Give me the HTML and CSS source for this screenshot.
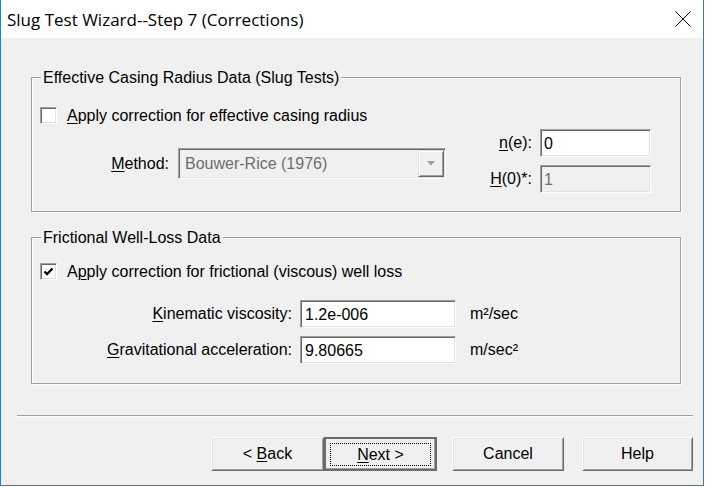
FILE: index.html
```html
<!DOCTYPE html>
<html>
<head>
<meta charset="utf-8">
<title>Slug Test Wizard--Step 7 (Corrections)</title>
<link rel="stylesheet" href="styles.css">
</head>
<body>
<div class="window">
  <div class="titlebar">
    <span class="title">Slug Test Wizard--Step 7 (Corrections)</span>
    <svg class="close" width="16" height="16" viewBox="0 0 16 16"><path d="M0.5 0.5 L15.5 15.5 M15.5 0.5 L0.5 15.5" stroke="#000" stroke-width="1" fill="none"/></svg>
  </div>
  <div class="client">
    <div class="group g1">
      <div class="group-title">Effective Casing Radius Data (Slug Tests)</div>
      <div class="check-row c1">
        <span class="checkbox"></span>
        <span><u>A</u>pply correction for effective casing radius</span>
      </div>
      <div class="method-row">
        <div class="method">
          <span class="method-lbl"><u>M</u>ethod:</span>
          <div class="combo">
            <span class="combo-text">Bouwer-Rice (1976)</span>
            <span class="combo-btn"><svg width="8" height="5" viewBox="0 0 8 5"><path d="M0 0 H8 L4 4.5 Z" fill="#a0a0a0"/></svg></span>
          </div>
        </div>
        <div class="params">
          <div class="param"><span class="param-lbl"><u>n</u>(e):</span><div class="edit small">0</div></div>
          <div class="param"><span class="param-lbl"><u>H</u>(0)*:</span><div class="edit small disabled">1</div></div>
        </div>
      </div>
    </div>

    <div class="group g2">
      <div class="group-title">Frictional Well-Loss Data</div>
      <div class="check-row c2">
        <span class="checkbox"><svg width="15" height="15" viewBox="0 0 15 15"><polyline points="3.5,7.5 6,10 11.5,4.5" fill="none" stroke="#000" stroke-width="2.3"/></svg></span>
        <span>A<u>p</u>ply correction for frictional (viscous) well loss</span>
      </div>
      <div class="field-row r1">
        <span class="field-lbl"><u>K</u>inematic viscosity:</span>
        <div class="edit wide">1.2e-006</div>
        <span class="unit">m²/sec</span>
      </div>
      <div class="field-row r2">
        <span class="field-lbl"><u>G</u>ravitational acceleration:</span>
        <div class="edit wide">9.80665</div>
        <span class="unit">m/sec²</span>
      </div>
    </div>

    <div class="sep"></div>

    <div class="buttons">
      <div class="btn back"><span>&lt; <u>B</u>ack</span></div>
      <div class="btn next"><span class="focus"><span><u>N</u>ext &gt;</span></span></div>
      <div class="btn cancel"><span>Cancel</span></div>
      <div class="btn help"><span>Help</span></div>
    </div>
  </div>
</div>
</body>
</html>
```

FILE: styles.css
```css
* { box-sizing: border-box; }
html, body { margin: 0; padding: 0; }
body {
  width: 708px;
  height: 487px;
  background: #fff;
  font-family: "Liberation Sans", Arial, sans-serif;
  font-size: 16px;
  line-height: 18px;
  color: #000;
  overflow: hidden;
}
u { text-decoration-thickness: 1px; text-underline-offset: 2px; }

.window {
  width: 704px;
  height: 486px;
  border: 1px solid #1883d7;
  border-top: none;
  display: flex;
  flex-direction: column;
}
.titlebar {
  height: 38px;
  flex: none;
  background: #fff;
  display: flex;
  align-items: center;
  padding-left: 6px;
  padding-right: 12px;
}
.title {
  font-family: "Open Sans", "Noto Sans", sans-serif;
  font-size: 17px;
  line-height: 23px;
}
.close { margin-left: auto; display: block; }

.client {
  flex: 1;
  background: #f0f0f0;
  padding-top: 39px;
}

.group {
  margin-left: 30px;
  width: 650px;
  border: 1px solid #a0a0a0;
  box-shadow: inset 1px 1px 0 #fff, 1px 1px 0 #fff;
}
.group-title {
  width: fit-content;
  margin: -9px 0 0 9px;
  padding: 0 2px;
  background: #f0f0f0;
  line-height: 18px;
}
.g2 { margin-top: 25px; padding-bottom: 19px; }

.check-row {
  display: flex;
  align-items: center;
  height: 17px;
  margin-left: 8px;
  gap: 10px;
}
.c1 { margin-top: 20px; }
.c2 { margin-top: 16px; }
.checkbox {
  width: 17px;
  height: 17px;
  flex: none;
  background: #fff;
  border: 1px solid;
  border-color: #a0a0a0 #fff #fff #a0a0a0;
  box-shadow: inset 1px 1px 0 #696969, inset -1px -1px 0 #e3e3e3;
}
.checkbox svg { display: block; }

.method-row {
  display: flex;
  align-items: flex-start;
  margin-top: 5px;
  padding-right: 29px;
  padding-bottom: 18px;
}
.method {
  display: flex;
  align-items: center;
  margin-top: 19px;
}
.method-lbl {
  width: 137px;
  text-align: right;
  margin-right: 9px;
}
.combo {
  width: 268px;
  height: 31px;
  display: flex;
  align-items: stretch;
  padding: 1px;
  background: #f0f0f0;
  border: 1px solid;
  border-color: #a0a0a0 #fff #fff #a0a0a0;
  box-shadow: inset 1px 1px 0 #696969, inset -1px -1px 0 #e3e3e3;
}
.combo-text {
  flex: 1;
  padding-left: 5px;
  line-height: 27px;
  color: #6d6d6d;
}
.combo-btn {
  width: 26px;
  flex: none;
  display: flex;
  align-items: center;
  justify-content: center;
  border: 1px solid;
  border-color: #e3e3e3 #696969 #696969 #e3e3e3;
  box-shadow: inset 1px 1px 0 #fff, inset -1px -1px 0 #a0a0a0;
  background: #f0f0f0;
}
.combo-btn svg { display: block; }

.params {
  margin-left: auto;
  display: flex;
  flex-direction: column;
  gap: 8px;
}
.param { display: flex; align-items: center; }
.param-lbl {
  width: 60px;
  text-align: right;
  margin-right: 8px;
}

.edit {
  height: 28px;
  border: 1px solid;
  border-color: #a0a0a0 #fff #fff #a0a0a0;
  box-shadow: inset 1px 1px 0 #696969, inset -1px -1px 0 #e3e3e3;
  background: #fff;
  padding: 2px 0 0 4px;
  line-height: 24px;
}
.edit.small { width: 111px; padding-left: 3px; }
.edit.wide { width: 156px; }
.edit.disabled { background: #f0f0f0; color: #6d6d6d; }

.field-row { display: flex; align-items: center; }
.r1 { margin-top: 20px; }
.r2 { margin-top: 8px; }
.field-lbl {
  width: 260px;
  text-align: right;
  margin-right: 8px;
}
.unit { margin-left: 14px; }

.sep {
  margin: 31px 0 0 16px;
  width: 676px;
  height: 2px;
  border-top: 1px solid #a0a0a0;
  border-bottom: 1px solid #fff;
}

.buttons {
  display: flex;
  justify-content: flex-end;
  margin-top: 20px;
  padding-right: 10px;
}
.btn {
  height: 34px;
  display: flex;
  align-items: center;
  justify-content: center;
  background: #f0f0f0;
  border: 1px solid;
  border-color: #fff #696969 #696969 #fff;
  box-shadow: inset 1px 1px 0 #e3e3e3, inset -1px -1px 0 #a0a0a0;
}
.back { width: 113px; }
.next {
  width: 113px;
  margin-right: 15px;
  border: 2px solid #6b6b6b;
  box-shadow: inset -1px -1px 0 #a0a0a0;
  padding: 4px 4px 3px 4px;
  align-items: stretch;
}
.focus {
  flex: 1;
  display: flex;
  align-items: center;
  justify-content: center;
  border: 1px dotted #000;
}
.cancel { width: 112px; margin-right: 18px; }
.help { width: 111px; }
```
